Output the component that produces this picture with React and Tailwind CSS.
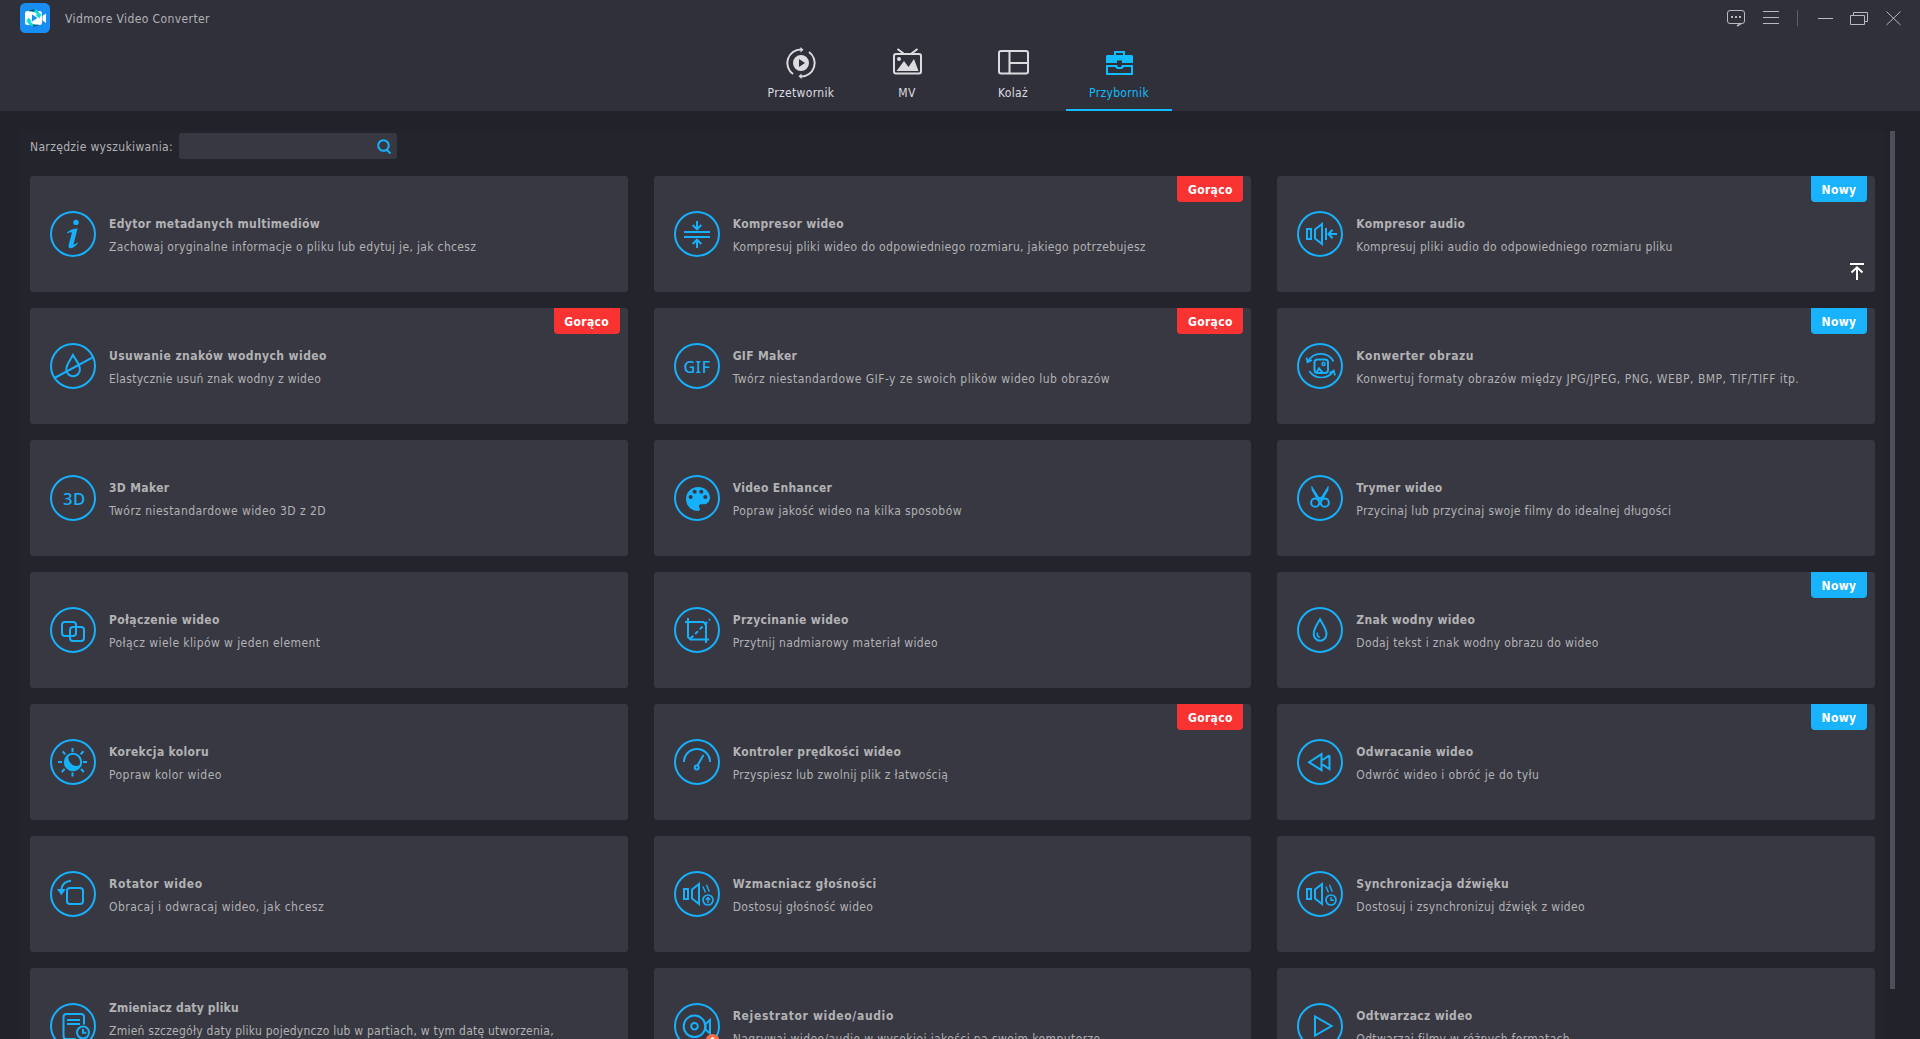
import { useState } from "react";

const BLUE = "#16b0fb";

// Round 46px tool icon, children are drawn inside the ring
function Ring({ children }) {
  return (
    <svg
      className="w-[46px] h-[46px] shrink-0 overflow-visible"
      viewBox="0 0 46 46"
      fill="none"
      stroke={BLUE}
      strokeWidth="2"
    >
      <circle cx="23" cy="23" r="22" />
      {children}
    </svg>
  );
}

const speaker = (
  <>
    <rect x="10" y="18" width="4" height="10" />
    <path d="M25 13v20l-7-5.5v-9z" />
  </>
);

const waves = <path d="M28.9 15.5l2.6 6M32.5 13.8l2.8 7" strokeWidth="1.4" />;

const icons = {
  info: (
    <g fill={BLUE} stroke="none">
      <circle cx="26" cy="11.4" r="2.7" />
      <path d="M17 21.7c3-2.9 6.3-4.2 10.6-4.2L23.7 32.4c-.5 2 1.200 1.300 3.700-.8l.5.600c-2.700 3.300-5.300 5-7.400 5-2.200 0-2.300-1.800-1.600-4.300l2.700-10c.6-2.100-.7-2.300-4-.5z" />
    </g>
  ),
  compress: (
    <>
      <path d="M10 21h26M10 26h26" />
      <path d="M23 10v8M18.7 14l4.300 4.300 4.300-4.300M23 37v-8M18.7 33l4.300-4.300 4.300 4.300" />
    </>
  ),
  audioCompress: (
    <>
      {speaker}
      <path d="M29 17v12M40 23h-8M35.5 18.8L31.5 23l4 4.2" />
    </>
  ),
  noWatermark: (
    <>
      <path d="M23 12c-2.300 4.500-6.700 9.300-6.700 14.500a6.800 6.800 0 0 0 13.600 0C29.900 21.300 25.300 16.500 23 12z" />
      <path d="M4.500 35L42.700 14.300" />
    </>
  ),
  gif: (
    <text x="9.5" y="30" fontSize="17" fontWeight="500" fontFamily="Noto Sans, sans-serif" fill={BLUE} stroke="none" textLength="27" lengthAdjust="spacingAndGlyphs">
      GIF
    </text>
  ),
  imageConvert: (
    <>
      <rect x="17.5" y="16.5" width="13.5" height="13.5" rx="3" />
      <circle cx="26.5" cy="21" r="1.5" strokeWidth="1.5" />
      <path d="M19.5 29.5l2.500-4 3.500 4" />
      <path d="M11 18.500a14.500 14.500 0 0 1 25.500 0M9.500 14.500l1 4.700 4.500-2.200M12.300 28a14.500 14.500 0 0 0 24.200 0M38 32.500l-1.200-4.900-4.300 2.400" strokeWidth="1.7" />
    </>
  ),
  threeD: (
    <text x="13" y="30" fontSize="17" fontWeight="500" fontFamily="Noto Sans, sans-serif" fill={BLUE} stroke="none" textLength="22.5" lengthAdjust="spacingAndGlyphs">
      3D
    </text>
  ),
  palette: (
    <path
      transform="translate(8 8) scale(1.333)"
      fill={BLUE}
      stroke="none"
      d="M12 3c-4.970 0-9 4.030-9 9s4.030 9 9 9c.83 0 1.500-.67 1.500-1.500 0-.39-.15-.74-.39-1.010-.23-.26-.38-.61-.38-.99 0-.83.67-1.500 1.500-1.500H16c2.760 0 5-2.240 5-5 0-4.420-4.030-8-9-8zm-5.500 9c-.83 0-1.500-.67-1.500-1.500S5.670 9 6.500 9 8 9.670 8 10.500 7.330 12 6.500 12zm3-4C8.670 8 8 7.330 8 6.500S8.670 5 9.500 5s1.500.67 1.500 1.500S10.330 8 9.500 8zm5 0c-.83 0-1.500-.67-1.500-1.500S13.670 5 14.500 5s1.500.67 1.500 1.500S15.330 8 14.500 8zm3 4c-.83 0-1.500-.67-1.500-1.500S16.670 9 17.500 9s1.500.67 1.500 1.500-.67 1.500-1.500 1.500z"
    />
  ),
  scissors: (
    <>
      <circle cx="18.2" cy="27.7" r="4.1" />
      <circle cx="27.8" cy="27.7" r="4.1" />
      <path d="M14.8 11.5L15 15l5.500 9.500 2-1zM31.200 11.500L31 15l-5.500 9.500-2-1z" fill={BLUE} strokeWidth=".8" />
      <path d="M22.5 22.5l3 3M23.5 22.5l-3 3" />
    </>
  ),
  merge: (
    <>
      <rect x="12" y="15" width="14" height="14" rx="3" />
      <rect x="20" y="20" width="14" height="14" rx="3" />
    </>
  ),
  crop: (
    <>
      <path d="M14 11v19l2.500 2.500H35M11 15h18.500l2.500 2.500V36" />
      <path d="M16.5 31.5L36 12.3" strokeDasharray="4 2.5" />
    </>
  ),
  watermark: (
    <>
      <path d="M23 12.300c-2.500 4.500-6.300 9.500-6.300 14.700a6.400 6.700 0 0 0 12.800 0C29.500 21.800 25.500 16.800 23 12.300z" />
      <path d="M20.3 25.5c-.3 2.700.6 4.500 2.700 5" strokeWidth="1.5" />
    </>
  ),
  sun: (
    <>
      <circle cx="23" cy="23" r="8.2" />
      <path d="M18.5 16.500a8.200 8.200 0 1 0 12.300 9c-3 2.200-7 1.800-9.600-.8-2.500-2.400-3.300-5.500-2.700-8.200z" fill={BLUE} stroke="none" />
      <path d="M22.5 9v4M22.5 33.5v4M8 23h4M33 23h4M12.7 12.3l2.500 3M33.500 12.300l-2.800 3M11.800 33l2.800-3M33.800 33L31 30" />
    </>
  ),
  speed: (
    <>
      <path d="M10 23a13 13 0 0 1 26 0" />
      <circle cx="22.7" cy="28.5" r="2" />
      <path d="M23.5 26.5L29.5 16" />
    </>
  ),
  reverse: <path d="M24.5 15.2v16L12 23.2zM32.5 16.2v14L25.5 25.500M32.500 16.200L25.500 21" />,
  rotate: (
    <>
      <rect x="17" y="17" width="16" height="16" rx="3" />
      <path d="M21 9.700c-5.200.4-9 3.500-9.500 9" />
      <path d="M7 18h8.800l-4.400 6.300z" fill={BLUE} stroke="none" />
    </>
  ),
  volume: (
    <>
      {speaker}
      {waves}
      <circle cx="34" cy="29" r="5" strokeWidth="1.7" />
      <path d="M34 32.200v-5.400M31.800 28.800l2.200-2.300 2.200 2.300" strokeWidth="1.4" />
    </>
  ),
  sync: (
    <>
      {speaker}
      {waves}
      <circle cx="34" cy="29" r="5" strokeWidth="1.7" />
      <path d="M34 26v3.200h3" strokeWidth="1.4" />
    </>
  ),
  date: (
    <>
      <path d="M34 21.500V14a3 3 0 0 0-3-3H16.500a3 3 0 0 0-3 3v19a3 3 0 0 0 3 3H26M17 17h13M17 21h13" />
      <circle cx="33" cy="29.5" r="6" />
      <path d="M33 26v3.800h3.500" />
    </>
  ),
  recorder: (
    <>
      <circle cx="20.5" cy="23.3" r="10.8" />
      <circle cx="20.5" cy="23.3" r="3.3" />
      <path d="M36 17v13.500l-4.500-4v-5.500z" />
      <circle cx="38.5" cy="38" r="7" fill="#ff6b47" stroke="none" />
      <path d="M38.5 41v-6.500M36 37l2.500-2.500L41 37" stroke="#fff" strokeWidth="1.2" />
    </>
  ),
  player: <path d="M18 13.500v19L34.500 23z" />,
};

const tools = [
  { icon: "info", title: "Edytor metadanych multimediów", text: "Zachowaj oryginalne informacje o pliku lub edytuj je, jak chcesz" },
  { icon: "compress", title: "Kompresor wideo", text: "Kompresuj pliki wideo do odpowiedniego rozmiaru, jakiego potrzebujesz", badge: "hot" },
  { icon: "audioCompress", title: "Kompresor audio", text: "Kompresuj pliki audio do odpowiedniego rozmiaru pliku", badge: "new" },
  { icon: "noWatermark", title: "Usuwanie znaków wodnych wideo", titleStyle: "tracking-[0.42px]", text: "Elastycznie usuń znak wodny z wideo", textStyle: "tracking-[0.27px]", badge: "hot" },
  { icon: "gif", title: "GIF Maker", text: "Twórz niestandardowe GIF-y ze swoich plików wideo lub obrazów", textStyle: "tracking-[0.46px]", badge: "hot" },
  { icon: "imageConvert", title: "Konwerter obrazu", titleStyle: "tracking-[0.53px]", text: "Konwertuj formaty obrazów między JPG/JPEG, PNG, WEBP, BMP, TIF/TIFF itp.", textStyle: "tracking-[0.47px]", badge: "new" },
  { icon: "threeD", title: "3D Maker", text: "Twórz niestandardowe wideo 3D z 2D", textStyle: "tracking-[0.45px]" },
  { icon: "palette", title: "Video Enhancer", text: "Popraw jakość wideo na kilka sposobów", textStyle: "tracking-[0.41px]" },
  { icon: "scissors", title: "Trymer wideo", text: "Przycinaj lub przycinaj swoje filmy do idealnej długości" },
  { icon: "merge", title: "Połączenie wideo", text: "Połącz wiele klipów w jeden element", textStyle: "tracking-[0.41px]" },
  { icon: "crop", title: "Przycinanie wideo", text: "Przytnij nadmiarowy materiał wideo" },
  { icon: "watermark", title: "Znak wodny wideo", text: "Dodaj tekst i znak wodny obrazu do wideo", badge: "new" },
  { icon: "sun", title: "Korekcja koloru", text: "Popraw kolor wideo", textStyle: "tracking-[0.45px]" },
  { icon: "speed", title: "Kontroler prędkości wideo", text: "Przyspiesz lub zwolnij plik z łatwością", badge: "hot" },
  { icon: "reverse", title: "Odwracanie wideo", text: "Odwróć wideo i obróć je do tyłu", textStyle: "tracking-[0.41px]", badge: "new" },
  { icon: "rotate", title: "Rotator wideo", titleStyle: "tracking-[0.6px]", text: "Obracaj i odwracaj wideo, jak chcesz", textStyle: "tracking-[0.45px]" },
  { icon: "volume", title: "Wzmacniacz głośności", titleStyle: "tracking-[0.43px]", text: "Dostosuj głośność wideo" },
  { icon: "sync", title: "Synchronizacja dźwięku", text: "Dostosuj i zsynchronizuj dźwięk z wideo" },
  { icon: "date", title: "Zmieniacz daty pliku", titleStyle: "tracking-[0.18px]", text: "Zmień szczegóły daty pliku pojedynczo lub w partiach, w tym datę utworzenia,", textStyle: "min-h-8 tracking-[0.24px]" },
  { icon: "recorder", title: "Rejestrator wideo/audio", titleStyle: "tracking-[0.65px]", text: "Nagrywaj wideo/audio w wysokiej jakości na swoim komputerze", textStyle: "tracking-[0.4px]" },
  { icon: "player", title: "Odtwarzacz wideo", text: "Odtwarzaj filmy w różnych formatach" },
];

const badges = {
  hot: { label: "Gorąco", style: "w-[66px] bg-[#f93232]" },
  new: { label: "Nowy", style: "w-[56px] bg-[#19b2fc]" },
};

// 32x32 tab icons
const tabs = [
  {
    key: "converter",
    label: "Przetwornik",
    icon: (
      <>
        <path d="M16 2.500A13.500 13.500 0 0 0 8 27M16 29.500A13.500 13.500 0 0 0 24 5" fill="none" stroke="currentColor" strokeWidth="2" />
        <path d="M15.5 0l3 2.700-3 2.800zM16.500 26.500l-3 2.700 3 2.800z" fill="currentColor" />
        <path d="M16 8a8 8 0 1 0 0 16 8 8 0 0 0 0-16zm-2 4l6 4-6 4z" fill="currentColor" fillRule="evenodd" />
      </>
    ),
  },
  {
    key: "mv",
    label: "MV",
    icon: (
      <>
        <rect x="3" y="7" width="27" height="19.5" rx="2" fill="none" stroke="currentColor" strokeWidth="2" />
        <path d="M6.5 2l6 4.500M26.500 2l-6 4.500" stroke="currentColor" strokeWidth="2" />
        <path d="M5.5 24l7.500-10 4.500 6 5.500-8L27.500 24z" fill="currentColor" />
        <circle cx="8" cy="12" r="2" fill="currentColor" />
      </>
    ),
  },
  {
    key: "collage",
    label: "Kolaż",
    icon: (
      <>
        <rect x="2" y="4" width="29" height="22.5" rx="2" fill="none" stroke="currentColor" strokeWidth="2" />
        <path d="M12.5 4v22.500M12.500 16H31" stroke="currentColor" strokeWidth="2" />
      </>
    ),
  },
  {
    key: "toolbox",
    label: "Przybornik",
    icon: (
      <>
        <path d="M12 8V5h9v3" fill="none" stroke="currentColor" strokeWidth="2" />
        <path d="M4 8h25l1 1v7H19v-2.500h-5V16H3V9z" fill="currentColor" />
        <path d="M12 19H4v8h25v-8h-8" fill="none" stroke="currentColor" strokeWidth="2" />
        <path d="M12 18h2l1 2h3l1-2h2v2l-2 2h-5l-2-2z" fill="currentColor" />
      </>
    ),
  },
];

function Logo() {
  return (
    <svg className="w-[30px] h-[30px]" viewBox="0 0 30 30">
      <rect width="30" height="30" rx="5.5" fill="#188ef5" />
      <rect x="5" y="8" width="17" height="14" rx="2.5" fill="#fff" />
      <path d="M22.5 13l3.500-2.500v9.500L22.500 17.500z" fill="#fff" />
      <path d="M8.500 8.500c3.500-3.300 9-3 11.500 2.500l1.500-.5-2 5-4-3.500 1.700-.5C15.500 9 12 7.500 8.500 8.500z" fill="#0bdcd8" />
      <path d="M19 21.500c-3.500 3.300-9 3-11.500-2.500l-1.300.5 2-5 3.800 3.500-1.600.5c1.600 2.500 5.100 4 8.600 3z" fill="#0bdcd8" />
      <path d="M8.500 8.500c1.800-1.900 4.200-2.500 6.500-2l-1 2.200c-1.800-.7-3.700-.7-5.500-.2zM19 21.500c-1.800 1.900-4.200 2.500-6.500 2l1-2.200c1.800.7 3.700.7 5.500.2z" fill="#075a8c" />
      <path d="M12 11.500l5.500 3.500-5.500 3.500z" fill="#188ef5" />
    </svg>
  );
}

function WindowButtons() {
  return (
    <svg className="w-[178px] h-[36px]" viewBox="0 0 178 36" fill="none" stroke="#b9b9be">
      {/* Feedback */}
      <rect x="3.500" y="10.500" width="17" height="13" rx="2.500" />
      <path d="M13 26l4-2.500" strokeWidth="1.5" />
      <path d="M7 17h2M11 17h2M15 17h2" strokeWidth="2" />
      {/* Menu */}
      <path d="M39 11.500h16M39 17.500h16M39 23.500h16" />
      <path d="M73.500 10v16" stroke="#5f5f69" />
      {/* Minimize, restore, close */}
      <path d="M94 18.500h15" />
      <path d="M126.500 15.500h14v9h-14zM129.500 15v-2.500h14v9H141" />
      <path d="M162.500 11.500l14 13.500M176.500 11.500l-14 13.500" />
    </svg>
  );
}

function ToolCard({ tool }) {
  const badge = badges[tool.badge];

  return (
    <div className="relative h-[116px] rounded-[3px] bg-[#383842] flex items-center gap-[13px] pl-5 pr-5">
      <Ring>{icons[tool.icon]}</Ring>
      <div className="flex flex-col gap-[7px] pt-0.5 leading-4 whitespace-nowrap">
        <h3 className={`font-bold ${tool.titleStyle ?? ""}`}>{tool.title}</h3>
        <p className={tool.textStyle}>{tool.text}</p>
      </div>
      {badge && (
        <span
          className={`absolute top-0 right-2 h-[26px] pt-0.5 rounded-b-[4px] flex items-center justify-center font-bold text-white ${badge.style}`}
        >
          {badge.label}
        </span>
      )}
    </div>
  );
}

function App() {
  const [activeTab, setActiveTab] = useState("toolbox");
  const [query, setQuery] = useState("");

  return (
    <div className="h-[1039px] w-[1920px] overflow-hidden flex flex-col bg-[#22222a] text-[#b2b2b4] text-[12px] tracking-[0.34px] font-['DejaVu_Sans_Condensed','DejaVu_Sans',sans-serif]">
      {/* Header */}
      <header className="h-[111px] shrink-0 bg-[#30303b] flex flex-col">
        <div className="h-9 flex items-center justify-between pl-5 pr-[18px]">
          <div className="flex items-center gap-[15px]">
            <Logo />
            <span className="leading-4 pt-0.5 tracking-[0.4px]">Vidmore Video Converter</span>
          </div>
          <WindowButtons />
        </div>
        <nav className="flex-1 flex justify-center">
          {tabs.map((tab) => (
            <button
              key={tab.key}
              onClick={() => setActiveTab(tab.key)}
              className={`w-[106px] pt-[11px] flex flex-col items-center gap-1.5 border-b-2 ${
                activeTab === tab.key
                  ? "text-[#13bcff] border-[#13bcff]"
                  : "text-[#dcdce0] border-transparent"
              }`}
            >
              <svg className="w-8 h-8" viewBox="0 0 32 32">
                {tab.icon}
              </svg>
              <span className="leading-4">{tab.label}</span>
            </button>
          ))}
        </nav>
      </header>

      {/* Toolbox */}
      <main className="flex-1 min-h-0 pt-5 pl-5 flex gap-[5px]">
        <section className="relative w-[1865px] overflow-hidden bg-[#24242c] px-2.5">
          <div className="flex items-center pt-0.5 gap-[7px]">
            <label htmlFor="search" className="w-[142px] pt-0.5 leading-4 whitespace-nowrap">
              Narzędzie wyszukiwania:
            </label>
            <div className="w-[218px] h-[26px] rounded-[3px] bg-[#383842] flex items-center pl-2 pr-1.5">
              <input
                id="search"
                value={query}
                onChange={(e) => setQuery(e.target.value)}
                className="flex-1 min-w-0 bg-transparent outline-none"
              />
              <svg className="w-3.5 h-[15px] shrink-0" viewBox="0 0 14 15" fill="none" stroke={BLUE} strokeWidth="2">
                <circle cx="6.5" cy="6.5" r="5.3" />
                <path d="M9.5 10.5l4 4" />
              </svg>
            </div>
          </div>
          <div className="mt-[17px] grid grid-cols-3 gap-x-[26px] gap-y-4">
            {tools
              .filter((tool) => tool.title.toLowerCase().includes(query.toLowerCase()))
              .map((tool) => (
                <ToolCard key={tool.icon} tool={tool} />
              ))}
          </div>
          {/* Back to top */}
          <svg
            className="absolute top-[132px] right-[21px] w-3.5 h-[17px]"
            viewBox="0 0 14 17"
            fill="none"
            stroke="#fff"
            strokeWidth="2"
          >
            <path d="M0 1h14M7 17V5M1.5 9.500L7 4.300l5.500 5.200" />
          </svg>
        </section>
        {/* Scrollbar */}
        <div className="w-[5px] h-[858px] bg-[#4f4f59]" />
      </main>
    </div>
  );
}

export default App;
